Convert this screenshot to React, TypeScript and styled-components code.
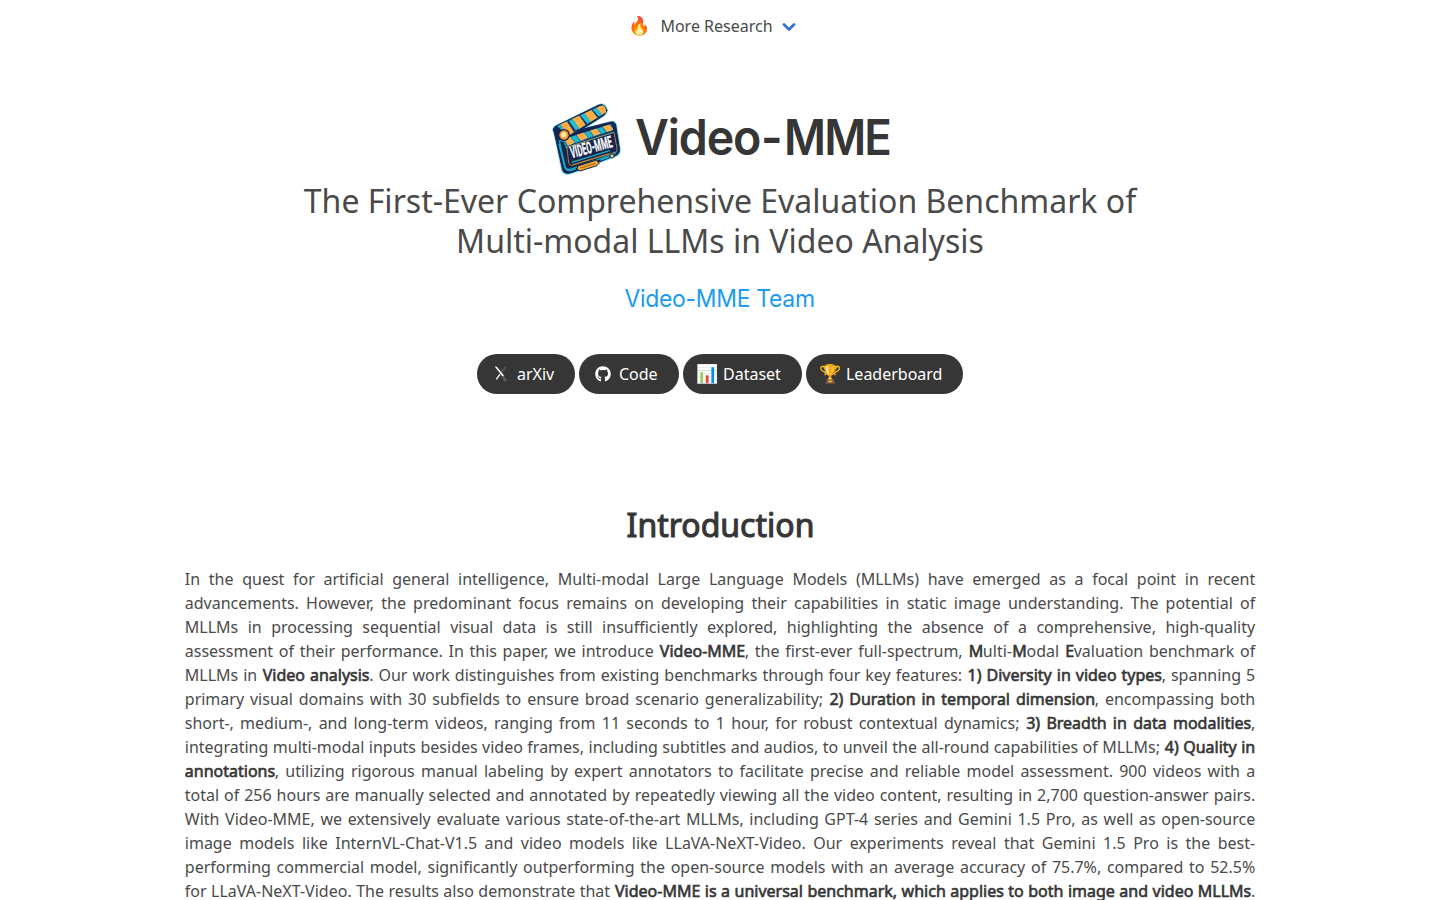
import React from "react";
import styled, { createGlobalStyle } from "styled-components";
import { FaGithub } from "react-icons/fa";

const GlobalStyle = createGlobalStyle`
  *, *::before, *::after { box-sizing: border-box; }
  html, body { margin: 0; padding: 0; background: #fff; }
  body {
    color: #4a4a4a;
    font-family: "Noto Sans", "Noto Color Emoji", sans-serif;
    font-size: 16px;
    line-height: 24px;
  }
`;

const Page = styled.div`
  display: flex;
  flex-direction: column;
  align-items: center;
  height: 100vh;
  overflow: hidden;
`;

const NavBar = styled.nav`
  display: flex;
  align-items: center;
  height: 52px;
  flex: none;
  padding-right: 15px;
`;

const NavEmoji = styled.span`
  width: 32px;
  padding-bottom: 2px;
  font-size: 18px;
`;

const Chevron = styled.svg`
  display: block;
  margin: 2px 0 0 8px;
`;

const Hero = styled.header`
  display: flex;
  flex-direction: column;
  align-items: center;
  flex: none;
  padding-top: 50px;
`;

const TitleRow = styled.div`
  display: flex;
  align-items: center;
  height: 75px;
  margin-left: 3px;
`;

const LogoSvg = styled.svg`
  display: block;
  flex: none;
  width: 72px;
  height: 75px;
  margin: 1px 12px 0 0;
`;

const Title = styled.h1`
  display: flex;
  margin: -4px 0 0;
  color: #363636;
  font: 600 49px/54px Inter, sans-serif;
  white-space: nowrap;
`;

const Part = styled.span<{ $spacing: number; $width: number; $stretch: number }>`
  display: block;
  width: ${(p) => p.$width}px;
  letter-spacing: ${(p) => p.$spacing}px;
  transform: scaleX(${(p) => p.$stretch});
  transform-origin: left;
`;

const Subtitle = styled.h2`
  margin: 4px 0 0;
  font-weight: 400;
  font-size: 32px;
  line-height: 40px;
  text-align: center;
`;

const Team = styled.div`
  height: 30px;
  margin-top: 23px;
  color: #209cee;
  font: 400 24px/30px Inter, sans-serif;
  letter-spacing: -0.3px;
  transform: scaleX(0.955);
`;

const Links = styled.div`
  display: flex;
  gap: 4px;
  margin-top: 40px;
`;

const LinkButton = styled.a<{ $width: number }>`
  display: flex;
  align-items: center;
  width: ${(p) => p.$width}px;
  height: 40px;
  border-radius: 20px;
  padding-left: 14px;
  background: #363636;
  color: #fff;
  white-space: nowrap;
`;

const LinkIcon = styled.span`
  display: flex;
  align-items: center;
  justify-content: center;
  width: 20px;
  flex: none;
  margin-right: 6px;
`;

const EmojiIcon = styled(LinkIcon)`
  padding: 0 0 2px 2px;
  font-size: 18px;
`;

const Section = styled.section`
  width: 1070.4px;
  flex: none;
  padding-top: 113px;
`;

const SectionTitle = styled.h2`
  margin: 0 0 24px;
  padding-left: 1px;
  color: #363636;
  font-weight: 400;
  font-size: 32px;
  line-height: 36px;
  text-align: center;
  -webkit-text-stroke: 1.05px #363636;
`;

const Abstract = styled.p`
  margin: 0;
  text-align: justify;
`;

const Strong = styled.strong`
  margin: 0 -0.4px 0 0.4px;
  color: #363636;
  font-weight: 400;
  -webkit-text-stroke: 0.62px #363636;
`;

const Logo = () => (
  <LogoSvg viewBox="36 22 216 225">
    <defs>
      <clipPath id="arm"><path d="M54 91 184 31Q194 27 199 37L202 49 87 121Z" /></clipPath>
      <clipPath id="slate"><path d="M72 130 218 84 224 104 80 153Z" /></clipPath>
    </defs>
    <path d="M45 110Q38 102 45 94L180 27Q192 22 200 32L205 44Q205 52 198 57L137 99 218 78Q229 76 232 88L243 159Q246 175 231 182L103 231Q76 242 69 226L51 138Z" fill="#8fe2f5" stroke="#8fe2f5" strokeWidth="5" />
    <path d="M45 108Q40 99 49 92L180 28Q192 23 199 34L204 45 195 59 128 101 216 79Q227 77 230 88L241 157Q244 174 229 180L103 229Q77 239 71 224L52 137Z" fill="#142453" stroke="#142453" strokeWidth="3" />
    <g clipPath="url(#arm)">
      <path d="M40 20H215V135H40Z" fill="#1faec7" />
      <path d="M64 84 84 75 107 108 88 122ZM98 66 119 57 141 87 120 101ZM134 49 156 39 178 67 155 81ZM169 32 192 25 208 48 190 61Z" fill="#ffad3e" />
      <path d="M83 76 98 67 120 101 106 111ZM119 57 134 49 155 81 141 89ZM155 40 169 33 191 60 177 68Z" fill="#173969" />
      <path d="M90 76 101 69 121 97 110 104ZM124 59 136 52 156 78 145 84ZM160 41 172 35 190 57 180 63Z" fill="#28bed0" />
    </g>
    <g clipPath="url(#slate)">
      <path d="M65 75H230V160H65Z" fill="#126c98" />
      <path d="M76 131 94 124 107 141 87 151ZM112 117 134 110 147 126 126 135ZM152 104 173 98 185 114 165 121ZM190 92 211 86 223 102 204 109Z" fill="#ffb04d" />
      <path d="M96 125 110 119 124 135 109 141ZM136 111 150 106 163 121 149 126ZM175 98 188 94 201 109 188 114Z" fill="#20b8cc" />
    </g>
    <path d="M61 135 78 214Q82 225 98 220L226 174Q234 169 232 158L223 110 82 156 75 136Z" fill="#14274f" stroke="#139fc3" strokeWidth="4" />
    <path d="M84 155 225 110 234 158Q236 168 225 171L99 209Q92 211 89 202Z" fill="#15254d" stroke="#e9aa35" strokeWidth="2" />
    <path d="M98 200 212 165" stroke="#1eabc4" strokeWidth="4" />
    <path d="M101 207 209 174" stroke="#e99c2b" strokeWidth="2" />
    <path d="M116 211 173 193 180 203 174 210 123 226 114 221Z" fill="#f4a62e" stroke="#142453" strokeWidth="3" />
    <path d="M124 217 170 203" stroke="#733f29" strokeWidth="2" />
    <path d="M184 193 211 184" stroke="#1eabc4" strokeWidth="5" />
    <path d="M60 144 77 211Q81 226 95 224L110 219" fill="none" stroke="#1aabc6" strokeWidth="5" />
    <circle cx="75" cy="118" r="18" fill="#142453" />
    <circle cx="75" cy="118" r="14" fill="#f49a30" />
    <circle cx="74" cy="117" r="8" fill="#ffe9a0" />
    <circle cx="219" cy="181" r="6" fill="#ffd36b" stroke="#1b4156" strokeWidth="3" />
    <text transform="translate(98 188) rotate(-15.4) skewX(-2)" textLength="129" lengthAdjust="spacingAndGlyphs" fill="#fff" stroke="#fff" strokeWidth="0.8" fontFamily="Roboto, sans-serif" fontSize="49" fontWeight="700">VIDEO-MME</text>
  </LogoSvg>
);

const ArxivIcon = () => (
  <svg width="12" height="16" viewBox="0 0 12 16" fill="none">
    <path d="M10.5.8 5.9 6.2 1.4 13" stroke="#777" strokeWidth=".8" />
    <path d="M11.3 1.6 7 7" stroke="#666" strokeWidth=".6" />
    <path d="M5.3 7.2 10.2 15.2 11.3 14.3 6.5 7.5" stroke="#888" strokeWidth=".7" />
    <path d="M0 .4Q1 0 2 1L9 9.4 7.6 10.2.8 1.9Z" fill="#fff" />
    <path d="M5 8.3 1.2 13.4" stroke="#fff" strokeWidth="1.3" />
  </svg>
);

export default function App() {
  return (
    <Page>
      <GlobalStyle />
      <NavBar>
        <NavEmoji>🔥</NavEmoji>
        <span>More Research</span>
        <Chevron width="16" height="12" viewBox="0 0 16 12">
          <path d="M3 3.5 8 8.5 13 3.5" fill="none" stroke="#3273dc" strokeWidth="2.8" strokeLinecap="round" strokeLinejoin="round" />
        </Chevron>
      </NavBar>
      <Hero>
        <TitleRow>
          <Logo />
          <Title>
            <Part $spacing={-1.2} $width={126} $stretch={0.95}>Video</Part>
            <Part $spacing={0} $width={23} $stretch={0.95}>-</Part>
            <Part $spacing={-2} $width={107} $stretch={0.93}>MME</Part>
          </Title>
        </TitleRow>
        <Subtitle>
          The First-Ever Comprehensive Evaluation Benchmark of
          <br />
          Multi-modal LLMs in Video Analysis
        </Subtitle>
        <Team>Video-MME Team</Team>
        <Links>
          <LinkButton $width={98}><LinkIcon><ArxivIcon /></LinkIcon>arXiv</LinkButton>
          <LinkButton $width={100}><LinkIcon><FaGithub size={16} /></LinkIcon>Code</LinkButton>
          <LinkButton $width={119}><EmojiIcon>📊</EmojiIcon>Dataset</LinkButton>
          <LinkButton $width={157}><EmojiIcon>🏆</EmojiIcon>Leaderboard</LinkButton>
        </Links>
      </Hero>
      <Section>
        <SectionTitle>Introduction</SectionTitle>
        <Abstract>
          In the quest for artificial general intelligence, Multi-modal Large Language Models (MLLMs) have emerged as a
          focal point in recent advancements. However, the predominant focus remains on developing their capabilities in
          static image understanding. The potential of MLLMs in processing sequential visual data is still insufficiently
          explored, highlighting the absence of a comprehensive, high-quality assessment of their performance. In this
          paper, we introduce <Strong>Video-MME</Strong>, the first-ever full-spectrum, <Strong>M</Strong>ulti-
          <Strong>M</Strong>odal <Strong>E</Strong>valuation benchmark of MLLMs in <Strong>Video analysis</Strong>. Our
          work distinguishes from existing benchmarks through four key features:{" "}
          <Strong>1) Diversity in video types</Strong>, spanning 5 primary visual domains with 30 subfields to ensure
          broad scenario generalizability; <Strong>2) Duration in temporal dimension</Strong>, encompassing both short-,
          medium-, and long-term videos, ranging from 11 seconds to 1 hour, for robust contextual dynamics;{" "}
          <Strong>3) Breadth in data modalities</Strong>, integrating multi-modal inputs besides video frames, including
          subtitles and audios, to unveil the all-round capabilities of MLLMs;{" "}
          <Strong>4) Quality in annotations</Strong>, utilizing rigorous manual labeling by expert annotators to
          facilitate precise and reliable model assessment. 900 videos with a total of 256 hours are manually selected
          and annotated by repeatedly viewing all the video content, resulting in 2,700 question-answer pairs. With
          Video-MME, we extensively evaluate various state-of-the-art MLLMs, including GPT-4 series and Gemini 1.5 Pro,
          as well as open-source image models like InternVL-Chat-V1.5 and video models like LLaVA-NeXT-Video. Our
          experiments reveal that Gemini 1.5 Pro is the best-performing commercial model, significantly outperforming
          the open-source models with an average accuracy of 75.7%, compared to 52.5% for LLaVA-NeXT-Video. The results
          also demonstrate that{" "}
          <Strong>Video-MME is a universal benchmark, which applies to both image and video MLLMs</Strong>. Our dataset
          along with these findings underscores the need for further improvements in handling longer sequences and
          multi-modal data.
        </Abstract>
      </Section>
    </Page>
  );
}
